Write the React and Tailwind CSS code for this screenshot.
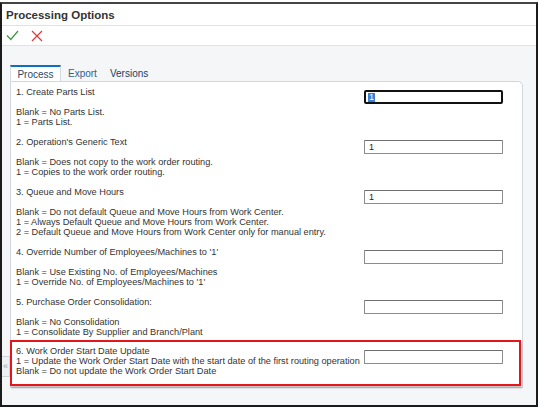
import React from 'react';

const items = [
  {
    title: '1. Create Parts List',
    value: '1',
    focused: true,
    lines: ['Blank = No Parts List.', '1 = Parts List.'],
  },
  {
    title: "2. Operation's Generic Text",
    value: '1',
    lines: ['Blank = Does not copy to the work order routing.', '1 = Copies to the work order routing.'],
  },
  {
    title: '3. Queue and Move Hours',
    value: '1',
    lines: [
      'Blank = Do not default Queue and Move Hours from Work Center.',
      '1 = Always Default Queue and Move Hours from Work Center.',
      '2 = Default Queue and Move Hours from Work Center only for manual entry.',
    ],
  },
  {
    title: "4. Override Number of Employees/Machines to '1'",
    value: '',
    lines: ['Blank = Use Existing No. of Employees/Machines', "1 = Override No. of Employees/Machines to '1'"],
  },
  {
    title: '5. Purchase Order Consolidation:',
    value: '',
    lines: ['Blank = No Consolidation', '1 = Consolidate By Supplier and Branch/Plant'],
  },
];

const Field = ({ value, focused }) => {
  if (focused) {
    return (
      <div className="w-[139px] h-[14px] mt-[3px] shrink-0 border-2 border-[#111] rounded-[2px] bg-white flex items-center pl-[2px]">
        <span className="bg-[#3b7fd9] text-white leading-[9px] text-[9px] px-[1px]">{value}</span>
      </div>
    );
  }
  return (
    <div className="w-[139px] h-[14px] mt-[3px] shrink-0 border border-[#8c8c8c] border-t-[#6f6f6f] rounded-[1px] bg-white flex items-center pl-[4px] text-[9px] text-[#222]">
      {value}
    </div>
  );
};

const Item = ({ item, last }) => (
  <div className={last ? 'flex justify-between mb-[3px]' : 'flex justify-between mb-[10px]'}>
    <div>
      <div>{item.title}</div>
      <div className="h-[10px]" />
      {item.lines.map((l) => (
        <div key={l}>{l}</div>
      ))}
    </div>
    <Field value={item.value} focused={item.focused} />
  </div>
);

export default function App() {
  return (
    <div className="w-[538px] h-[408px] bg-white pt-[2px] font-['Liberation_Sans',Arial,sans-serif]">
      <div className="h-[405px] border-2 border-[#1b1b1b] border-t-[#444] flex flex-col">
        <div className="h-[22px] flex items-center pl-[4px] pt-[2px] border-b border-[#dfe3e8]">
          <span className="text-[11.5px] font-bold text-[#333]">Processing Options</span>
        </div>
        <div className="h-[20px] flex items-center gap-[12px] pl-[4px] border-b border-[#dfe3e8]">
          <svg width="13" height="11" viewBox="0 0 13 11">
            <path d="M1 5.5 L4.8 9.5 L12 1" fill="none" stroke="#3f9a45" strokeWidth="1.3" />
          </svg>
          <svg width="12" height="12" viewBox="0 0 12 12">
            <path d="M1 1 L11 11 M11 1 L1 11" fill="none" stroke="#e2373a" strokeWidth="1.2" />
          </svg>
        </div>
        <div className="relative flex-1 bg-[#f4f6f8] pt-[19px] pl-[8px] pr-[13px]">
          <div className="flex items-end h-[16px] text-[10px]">
            <div className="h-[16px] w-[51px] bg-white border-t-2 border-[#0e6fc6] border-x border-x-[#d5dbe2] flex items-center justify-center pt-[1px] text-[#2b4a6b]">
              Process
            </div>
            <div className="ml-[7px] h-[16px] flex items-center text-[#2f5f8e]">Export</div>
            <div className="ml-[13px] h-[16px] flex items-center text-[#1c3d66]">Versions</div>
          </div>
          <div className="bg-white border border-[#d0d7e0] rounded-tr-[5px] h-[307px] pt-[5px] pl-[5px] pr-[19px] text-[9.2px] leading-[10px] text-[#333]">
            {items.map((it, i) => (
              <Item key={it.title} item={it} last={i === items.length - 1} />
            ))}
            <div className="ml-[-6px] mr-[-18px] border-2 border-[#e3161b] shadow-[1px_2px_2px_rgba(0,0,0,0.25)] pt-[4px] pb-[8px] pl-[4px] pr-[16px] flex justify-between">
              <div>
                <div>6. Work Order Start Date Update</div>
                <div>1 = Update the Work Order Start Date with the start date of the first routing operation</div>
                <div>Blank = Do not update the Work Order Start Date</div>
              </div>
              <div className="w-[139px] h-[14px] mt-[4px] shrink-0 border border-[#8c8c8c] border-t-[#6f6f6f] rounded-[1px] bg-white" />
            </div>
          </div>
          <div className="absolute left-0 top-[310px] w-[8px] h-[21px] bg-[#eef0f3] border border-l-0 border-[#cfd5dc] flex items-center justify-center text-[9px] text-[#9aa3ad] leading-none">
            «
          </div>
        </div>
      </div>
    </div>
  );
}
